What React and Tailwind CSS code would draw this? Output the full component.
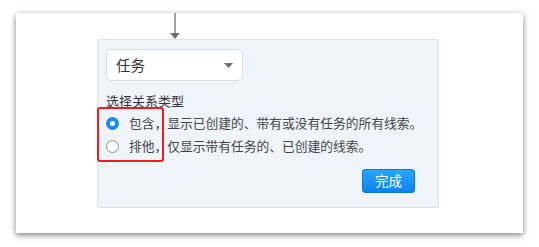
import { useState } from "react"

const font = { fontFamily: '"Noto Sans CJK SC", "Noto Sans", sans-serif' }

const Radio = ({ checked }) => (
    checked ? (
        <span className="flex items-center justify-center w-[13px] h-[13px] rounded-full bg-[#1a8cf0]">
            <span className="w-[5px] h-[5px] rounded-full bg-white" />
        </span>
    ) : (
        <span className="w-[13px] h-[13px] rounded-full border-[1.5px] border-[#8f8f8f] bg-white" />
    )
)

const App = () => {

    const [mode, setMode] = useState("include")

    const options = [
        { id: "include", label: "包含，", desc: "显示已创建的、带有或没有任务的所有线索。" },
        { id: "exclude", label: "排他，", desc: "仅显示带有任务的、已创建的线索。" },
    ]

    return (
        <div className="w-[539px] h-[247px] bg-white pt-[13px] pl-[16px]" style={font}>
            <div className="w-[507px] h-[220px] bg-white shadow-[0_2px_6px_rgba(0,0,0,0.5)] pl-[81px]">
                <svg width="12" height="26" viewBox="0 0 12 26" className="ml-[72px] block">
                    <line x1="6" y1="0" x2="6" y2="20" stroke="#6e6e6e" strokeWidth="1.3" />
                    <polygon points="1,20 11,20 6,26" fill="#6e6e6e" />
                </svg>
                <div className="relative flex flex-col w-[342px] h-[169px] bg-[#eff4fb] border border-[#dbe2ec] rounded-[2px] pl-[8px] pt-[9px]">
                    <div className="flex items-center justify-between w-[137px] h-[32px] bg-white border border-[#d9dde3] rounded-[6px] px-[9px]">
                        <span className="text-[14.5px] text-[#333]">任务</span>
                        <svg width="9" height="5" viewBox="0 0 9 5">
                            <polygon points="0,0 9,0 4.5,5" fill="#6b6b6b" />
                        </svg>
                    </div>
                    <div className="mt-[11px] h-[18px] leading-[18px] text-[13px] text-[#333]">
                        选择关系类型
                    </div>
                    <div className="mt-[2px]">
                        {options.map((o) => (
                            <div
                                key={o.id}
                                onClick={() => setMode(o.id)}
                                className="flex items-center h-[23px] cursor-pointer"
                            >
                                <Radio checked={mode === o.id} />
                                <span className="ml-[10px] text-[12.75px] text-[#444] leading-none">
                                    {o.label}{o.desc}
                                </span>
                            </div>
                        ))}
                    </div>
                    <button className="self-end mr-[23px] mt-[11px] w-[53px] h-[24px] rounded-[3px] border border-[#0b78d8] bg-gradient-to-b from-[#2aa6ff] to-[#0a82ec] text-white text-[13.5px] leading-none">
                        完成
                    </button>
                    <div className="absolute left-[-1px] top-[67px] w-[67px] h-[55px] border-2 border-[#ee1c1c] rounded-[3px]" />
                </div>
            </div>
        </div>
    )
}

export default App
